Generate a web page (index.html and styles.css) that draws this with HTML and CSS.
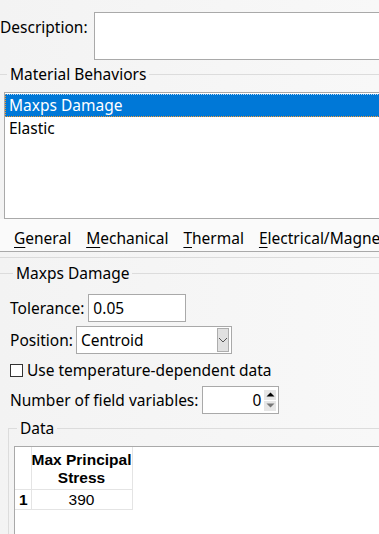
FILE: index.html
```html
<!DOCTYPE html>
<html lang="en">
<head>
  <meta charset="UTF-8">
  <title>Edit Material</title>
  <link rel="stylesheet" href="styles.css">
</head>
<body>
<div class="window">
  <div class="desc-row">
    <label class="desc-label">Description:</label>
    <div class="desc-box"></div>
  </div>

  <fieldset class="group behaviors">
    <legend>Material Behaviors</legend>
    <div class="listbox">
      <div class="list-item selected">Maxps Damage</div>
      <div class="list-item">Elastic</div>
    </div>
  </fieldset>

  <div class="tabs">
    <span class="tab"><u>G</u>eneral</span>
    <span class="tab"><u>M</u>echanical</span>
    <span class="tab"><u>T</u>hermal</span>
    <span class="tab"><u>E</u>lectrical/Magnetic</span>
  </div>

  <div class="panel">
    <fieldset class="group maxps">
      <legend>Maxps Damage</legend>

      <div class="field-row">
        <label>Tolerance:</label>
        <div class="textbox tolerance">0.05</div>
      </div>

      <div class="field-row">
        <label>Position:</label>
        <div class="textbox combo">
          Centroid
          <span class="drop-btn">
            <svg width="10" height="6" viewBox="0 0 10 6"><polyline points="1,1 5,5 9,1" fill="none" stroke="#555" stroke-width="1"/></svg>
          </span>
        </div>
      </div>

      <div class="check-row">
        <span class="checkbox"></span>
        <span>Use temperature-dependent data</span>
      </div>

      <div class="field-row">
        <label>Number of field variables:</label>
        <div class="textbox spin">
          <span class="spin-val">0</span>
          <span class="spin-btns">
            <span class="spin-up"><svg width="9" height="5" viewBox="0 0 9 5"><polygon points="0.5,4.5 4.5,0.5 8.5,4.5" fill="#000"/></svg></span>
            <span class="spin-down"><svg width="9" height="5" viewBox="0 0 9 5"><polygon points="0.5,0.5 8.5,0.5 4.5,4.5" fill="#777"/></svg></span>
          </span>
        </div>
      </div>

      <fieldset class="group data">
        <legend>Data</legend>
        <div class="table-wrap">
          <table class="grid">
            <tr>
              <th class="corner"></th>
              <th class="col-head"><div class="clip">Max Principal<br>Stress</div></th>
            </tr>
            <tr>
              <th class="row-head">1</th>
              <td>390</td>
            </tr>
          </table>
        </div>
      </fieldset>
    </fieldset>
  </div>
</div>
</body>
</html>
```

FILE: styles.css
```css
body {
  margin: 0;
  background: #f6f6f6;
  font-family: 'Noto Sans', sans-serif;
  font-size: 15.5px;
  color: #000;
}
.window {
  width: 379px;
  height: 534px;
  overflow: hidden;
  background: linear-gradient(to right, #f3f3f3, #f8f8f8);
}
.desc-row {
  display: flex;
  align-items: flex-start;
  padding-top: 12px;
}
.desc-label {
  line-height: 20px;
  margin-top: 5px;
}
.desc-box {
  margin-left: 6px;
  width: 320px;
  height: 46px;
  flex-shrink: 0;
  background: #fff;
  border: 1px solid #a9a9a9;
}
.group {
  margin: 0;
  padding: 0;
  border: none;
  border-top: 1px solid #dcdcdc;
  min-width: 0;
  width: 440px;
  box-sizing: border-box;
}
.group legend {
  line-height: 21px;
  padding: 0 3px;
  margin-left: 3px;
}
.behaviors {
  margin-top: 4px;
  padding: 7px 0 0 4px;
}
.listbox {
  height: 124px;
  background: #fff;
  border: 1px solid #a9a9a9;
  border-right: none;
  padding-top: 1px;
}
.list-item {
  height: 23px;
  line-height: 23px;
  padding-left: 4px;
  box-sizing: border-box;
}
.list-item.selected {
  background: #0078d7;
  color: #fff;
  border-top: 1px dotted #bcd8f2;
  border-bottom: 1px dotted #f39a32;
  border-left: 1px dotted #f39a32;
  padding-left: 3px;
  line-height: 21px;
}
.tabs {
  display: flex;
  gap: 15px;
  height: 33px;
  padding: 9px 0 0 14px;
  box-sizing: border-box;
  background: #fafafa;
  border-bottom: 1px solid #a9a9a9;
  white-space: nowrap;
  line-height: 20px;
}
.tab u {
  text-underline-offset: 3px;
}
.panel {
  margin-top: 5px;
  border-top: 1px solid #dadada;
  padding-top: 5px;
}
.maxps {
  padding: 10px 0 0 10px;
}
.field-row {
  display: flex;
  align-items: center;
  margin-bottom: 4px;
  white-space: nowrap;
}
.field-row label {
  line-height: 20px;
}
.textbox {
  margin-left: 4px;
  height: 28px;
  box-sizing: border-box;
  background: #fff;
  border: 1px solid #a9a9a9;
  line-height: 26px;
  padding-left: 4px;
  position: relative;
}
.tolerance {
  width: 98px;
}
.combo {
  width: 156px;
  margin-left: 3px;
}
.drop-btn {
  position: absolute;
  right: 2px;
  top: 1px;
  width: 12px;
  height: 24px;
  box-sizing: border-box;
  background: #e1e1e1;
  border: 1px solid #adadad;
  display: flex;
  align-items: center;
  justify-content: center;
}
.check-row {
  display: flex;
  align-items: center;
  gap: 4px;
  line-height: 20px;
  margin-top: 6px;
  white-space: nowrap;
}
.checkbox {
  width: 13px;
  height: 13px;
  box-sizing: border-box;
  border: 1px solid #333;
  background: #fff;
}
.field-row + .check-row + .field-row {
  margin-top: 6px;
}
.spin {
  width: 77px;
  display: flex;
  justify-content: flex-end;
  padding: 0 2px 0 0;
}
.spin-val {
  margin-right: 3px;
}
.spin-btns {
  display: flex;
  flex-direction: column;
  justify-content: center;
  gap: 1px;
}
.spin-up, .spin-down {
  width: 12px;
  height: 10px;
  display: flex;
  align-items: center;
  justify-content: center;
  background: #e6e6e6;
}
.data {
  margin: 4px 0 0 -2px;
  border-left: 1px solid #dcdcdc;
  padding: 7px 0 0 5px;
}
.table-wrap {
  height: 120px;
  background: #fff;
  border-top: 1px solid #a9a9a9;
  border-left: 1px solid #a9a9a9;
}
.grid {
  border-collapse: collapse;
  table-layout: fixed;
  font-family: 'Liberation Sans', Arial, sans-serif;
  font-size: 15.5px;
}
.grid th, .grid td {
  padding: 0;
  border-right: 1px solid #e4e4e4;
  border-bottom: 1px solid #e4e4e4;
}
.corner, .row-head {
  width: 16px;
  box-sizing: border-box;
}
.col-head {
  width: 100px;
  font-weight: bold;
  text-align: center;
}
.clip {
  width: 100px;
  overflow: hidden;
  white-space: nowrap;
  line-height: 18px;
  padding: 4px 0 2px;
  display: flex;
  flex-direction: column;
  align-items: center;
}
.row-head {
  font-weight: bold;
  text-align: left;
  padding-left: 4px !important;
  line-height: 19px;
}
.grid td {
  text-align: center;
  line-height: 19px;
}
```
